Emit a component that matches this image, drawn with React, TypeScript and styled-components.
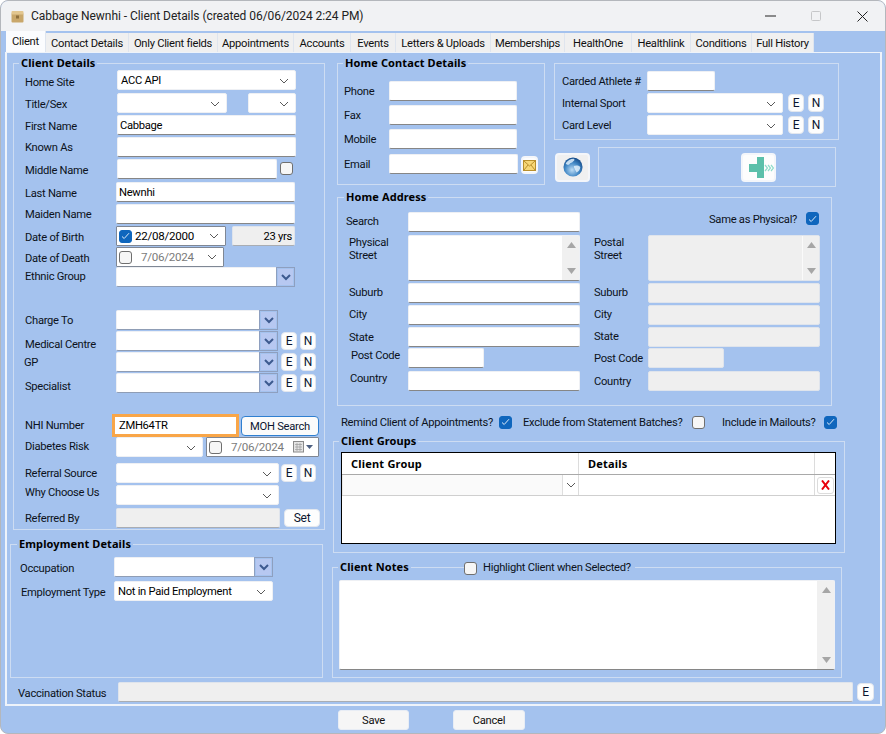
import React from 'react'
import styled, { createGlobalStyle } from 'styled-components'

const FORM_BLUE = '#a4c2ee'
const FIELD_GREY = '#efefef'

const GlobalStyle = createGlobalStyle`
  html, body { margin: 0; padding: 0; background: #fff; overflow: hidden; }
  * { box-sizing: border-box; }
  body { font-family: Roboto, "Noto Sans", sans-serif; font-size: 11.2px; letter-spacing: -0.28px; color: #0c1220; }
`

const Window = styled.div`
  width: 886px;
  height: 734px;
  border: 1px solid #b4b7bc;
  border-radius: 8px;
  overflow: hidden;
  background: ${FORM_BLUE};
  display: flex;
  flex-direction: column;
`

const TitleBar = styled.div`
  height: 30px;
  flex: none;
  background: #f1f2f4;
  display: flex;
  align-items: center;
  padding-left: 10px;
`

const TitleText = styled.div`
  margin-left: 7px;
  font-size: 12px;
  letter-spacing: -0.05px;
  color: #222;
  flex: 1;
`

const WinButton = styled.div`
  width: 46px;
  height: 30px;
  display: flex;
  align-items: center;
  justify-content: center;
`

const TabStrip = styled.div`
  height: 21px;
  flex: none;
  display: flex;
  align-items: flex-end;
  padding-left: 5px;
`

const Tab = styled.div<{ $w: number; $active?: boolean }>`
  width: ${p => p.$w}px;
  height: ${p => (p.$active ? 21 : 19)}px;
  padding-top: ${p => (p.$active ? 0 : 1)}px;
  background: ${p => (p.$active ? '#fbfcfe' : '#f0f0f0')};
  border-right: 1px solid #dfe5ee;
  display: flex;
  align-items: center;
  justify-content: center;
  white-space: nowrap;
  color: #101010;
`

const Panel = styled.div`
  width: 877px;
  height: 654px;
  flex: none;
  margin-left: 4px;
  border: 2px solid #eef3fa;
  border-top-width: 1px;
  padding-top: 1px;
  display: flex;
  flex-direction: column;
`

const FormBody = styled.div`
  display: grid;
  grid-template-columns: 325px 1fr;
`

const Column = styled.div`
  display: flex;
  flex-direction: column;
  align-items: flex-start;
  padding-top: 9px;
`

const Group = styled.div<{ $w: number; $h: number; $ml?: number; $mt?: number; $pt?: number }>`
  position: relative;
  flex: none;
  width: ${p => p.$w}px;
  height: ${p => p.$h}px;
  margin-left: ${p => p.$ml ?? 0}px;
  margin-top: ${p => p.$mt ?? 0}px;
  padding-top: ${p => p.$pt ?? 0}px;
  border: 1px solid #cddcf2;
`

const Legend = styled.div<{ $left?: number }>`
  position: absolute;
  top: -8px;
  left: ${p => p.$left ?? 5}px;
  padding: 0 2px;
  line-height: 14px;
  font-family: "Noto Sans", sans-serif;
  font-size: 11px;
  letter-spacing: 0.1px;
  font-weight: 700;
  background: ${FORM_BLUE};
  color: #000;
  white-space: nowrap;
`

const LegendCheck = styled(Legend)`
  display: flex;
  align-items: center;
  gap: 6px;
  font-family: Roboto, sans-serif;
  font-size: 11.2px;
  letter-spacing: -0.28px;
  font-weight: 400;
  line-height: 16px;
  padding: 0 4px 0 0;
  color: #0c1220;
`

const Row = styled.div<{ $h: number }>`
  display: flex;
  align-items: flex-start;
  height: ${p => p.$h}px;
`

const Label = styled.div<{ $x?: number; $w: number; $y?: number }>`
  flex: none;
  margin-left: ${p => p.$x ?? 0}px;
  width: ${p => p.$w}px;
  margin-top: ${p => p.$y ?? 3}px;
  line-height: 16px;
  white-space: nowrap;
`

const TwoLineLabel = styled(Label)`
  line-height: 13px;
  white-space: normal;
`

const Input = styled.div<{ $w: number; $h?: number; $ml?: number; $off?: boolean }>`
  flex: none;
  width: ${p => p.$w}px;
  height: ${p => p.$h ?? 20}px;
  margin-left: ${p => p.$ml ?? 0}px;
  background: ${p => (p.$off ? FIELD_GREY : '#fff')};
  border: 1px solid ${p => (p.$off ? '#dfe4ec' : '#eef0f4')};
  border-bottom-color: ${p => (p.$off ? '#dfe4ec' : '#868686')};
  border-radius: 2px;
  padding: 0 2px;
  line-height: 20px;
  color: #000;
  white-space: nowrap;
  overflow: hidden;
`

const DisabledInput = styled(Input)`
  border-bottom-color: #a9adb3;
`

const AgeBox = styled(Input)`
  text-align: right;
  padding-right: 2px;
  border-color: #dfe4ec;
  border-bottom-color: #a9adb3;
`

const NhiInput = styled(Input)`
  border: 3px solid #f9a648;
  border-radius: 0;
  line-height: 17px;
  padding: 0 4px;
`

const Memo = styled.div<{ $w: number; $h: number; $ml?: number; $off?: boolean }>`
  flex: none;
  display: flex;
  justify-content: flex-end;
  width: ${p => p.$w}px;
  height: ${p => p.$h}px;
  margin-left: ${p => p.$ml ?? 0}px;
  background: ${p => (p.$off ? FIELD_GREY : '#fff')};
  border: 1px solid ${p => (p.$off ? '#dfe4ec' : '#eef0f4')};
  border-bottom-color: ${p => (p.$off ? '#dfe4ec' : '#868686')};
  border-radius: 2px;
`

const ScrollTrack = styled.div<{ $off?: boolean }>`
  width: 17px;
  background: ${p => (p.$off ? FIELD_GREY : '#f0f0f0')};
  border-left: 1px solid ${p => (p.$off ? '#fafafa' : '#f0f0f0')};
  display: flex;
  flex-direction: column;
  justify-content: space-between;
  align-items: center;
  padding: 6px 0 6px;
`

const Combo = styled.div<{ $w: number; $ml?: number }>`
  flex: none;
  width: ${p => p.$w}px;
  height: 20px;
  margin-left: ${p => p.$ml ?? 0}px;
  background: #fff;
  border: 1px solid #eef0f4;
  border-radius: 2px;
  display: flex;
  align-items: center;
  justify-content: space-between;
  padding: 1px 6px 0 3px;
  color: #000;
  white-space: nowrap;
`

const Lookup = styled.div<{ $w: number; $ml?: number }>`
  flex: none;
  display: flex;
  width: ${p => p.$w}px;
  height: 20px;
  margin-left: ${p => p.$ml ?? 0}px;
  background: #fff;
  border: 1px solid #eef0f4;
  border-bottom-color: #8f9db5;
  border-radius: 2px 0 0 2px;
  justify-content: flex-end;
`

const LookupButton = styled.div`
  width: 19px;
  margin: -1px -1px -1px 0;
  background: ${FORM_BLUE};
  border: 1px solid #8e9fbf;
  padding: 1px;
  display: flex;

  & > span {
    flex: 1;
    background: #b7c8f1;
    display: flex;
    align-items: center;
    justify-content: center;
  }
`

const DateBox = styled.div<{ $w: number; $ml?: number; $muted?: boolean }>`
  flex: none;
  width: ${p => p.$w}px;
  height: 20px;
  margin-left: ${p => p.$ml ?? 0}px;
  background: #fff;
  border: 1px solid #7f8794;
  border-radius: 1px;
  display: flex;
  align-items: center;
  padding: 0 6px 0 2px;
  gap: ${p => (p.$muted ? 9 : 3)}px;
  color: ${p => (p.$muted ? '#7a7a7a' : '#000')};
  font-size: 11.6px;
  white-space: nowrap;

  & > svg:last-child { margin-left: auto; flex: none; }
`

const SmallButton = styled.div<{ $w?: number; $h?: number; $ml?: number; $mt?: number }>`
  flex: none;
  width: ${p => p.$w ?? 16}px;
  height: ${p => p.$h ?? 18}px;
  margin-left: ${p => p.$ml ?? 3}px;
  margin-top: ${p => p.$mt ?? 1}px;
  background: #fdfdfd;
  border: 1px solid #e3e7ee;
  border-radius: 4px;
  display: flex;
  align-items: center;
  justify-content: center;
  font-size: 12px;
  color: #0b1530;
`

const MohButton = styled(SmallButton)`
  border: 1px solid #2f7fd0;
  background: #fbfbfb;
  font-size: 11.2px;
`

const IconButton = styled(SmallButton)<{ $grey?: boolean }>`
  padding: 0;
  border-width: 2px;
  border-color: #f4f6fa;
  background: ${p => (p.$grey ? '#f0f0f0' : '#fdfdfd')};
`

const Box = styled.span<{ $on?: boolean; $ml?: number; $mt?: number }>`
  flex: none;
  display: inline-flex;
  align-items: center;
  justify-content: center;
  width: 13px;
  height: 13px;
  margin-left: ${p => p.$ml ?? 0}px;
  margin-top: ${p => p.$mt ?? 0}px;
  border-radius: 3px;
  background: ${p => (p.$on ? '#0f66bd' : '#f6f6f6')};
  border: 1px solid ${p => (p.$on ? '#0f66bd' : '#6f6f6f')};
`

const CheckLine = styled.div`
  margin-left: 9px;
  margin-top: 7px;
  height: 18px;
  display: flex;
  align-items: center;
`

const CheckText = styled.span<{ $w: number; $ml?: number }>`
  width: ${p => p.$w}px;
  margin-left: ${p => p.$ml ?? 0}px;
  white-space: nowrap;
`

const TopBand = styled.div`
  display: flex;
  align-items: flex-start;
  margin-left: 5px;
`

const SideColumn = styled.div`
  margin-left: 9px;
  width: 285px;
  display: flex;
  flex-direction: column;
`

const ButtonBand = styled.div`
  display: flex;
  align-items: center;
  margin-top: 7px;
`

const PlusFrame = styled.div`
  margin-left: 8px;
  width: 238px;
  height: 40px;
  border: 1px solid #cddcf2;
  display: flex;
  align-items: center;
  padding-left: 142px;
`

const GridTable = styled.div`
  margin-left: 7px;
  margin-top: 10px;
  width: 495px;
  height: 92px;
  background: #fff;
  border: 1px solid #000;
`

const TableRow = styled.div<{ $h: number; $rule: string }>`
  display: grid;
  grid-template-columns: 237px 236px 20px;
  height: ${p => p.$h}px;
  border-bottom: 1px solid ${p => p.$rule};
`

const HeadCell = styled.div<{ $last?: boolean }>`
  padding-left: ${p => (p.$last ? 0 : 9)}px;
  line-height: 21px;
  font-family: "Noto Sans", sans-serif;
  font-size: 11px;
  letter-spacing: 0.2px;
  font-weight: 700;
  color: #000;
  border-right: ${p => (p.$last ? 'none' : '1px solid #dcdcdc')};
`

const PickCell = styled.div`
  background: #fafafa;
  border-right: 1px solid #dcdcdc;
  border-left: 1px solid #e8e8e8;
  display: flex;
  justify-content: flex-end;

  & > span {
    width: 16px;
    border-left: 1px solid #dedede;
    background: #fff;
    display: flex;
    align-items: center;
    justify-content: center;
  }
`

const PlainCell = styled.div`
  border-right: 1px solid #dcdcdc;
`

const RemoveCell = styled.div`
  display: flex;
  align-items: center;
  justify-content: center;
`

const RemoveButton = styled.div`
  width: 17px;
  height: 17px;
  border: 1px solid #dcdcdc;
  border-radius: 3px;
  display: flex;
  align-items: center;
  justify-content: center;
`

const VaccineRow = styled.div`
  margin-top: 4px;
  margin-left: 11px;
  display: flex;
  align-items: flex-start;
  height: 20px;
`

const Footer = styled.div`
  flex: 1;
  display: flex;
  align-items: flex-start;
  padding: 4px 0 0 337px;
`

const FooterButton = styled.div<{ $w: number; $ml?: number }>`
  width: ${p => p.$w}px;
  height: 20px;
  margin-left: ${p => p.$ml ?? 0}px;
  background: #f6f6f6;
  border: 1px solid #e8edf5;
  border-radius: 3px;
  display: flex;
  align-items: center;
  justify-content: center;
  color: #111;
`

const tabs: [string, number][] = [
  ['Client', 40], ['Contact Details', 83], ['Only Client fields', 89], ['Appointments', 76],
  ['Accounts', 57], ['Events', 45], ['Letters & Uploads', 95], ['Memberships', 74],
  ['HealthOne', 67], ['Healthlink', 59], ['Conditions', 61], ['Full History', 62],
]

const Chevron = () => (
  <svg width="10" height="6" viewBox="0 0 10 6" fill="none" stroke="#5a5a5a" strokeWidth="1">
    <path d="M1 1l4 4 4-4" />
  </svg>
)

const LookupArrow = () => (
  <svg width="10" height="7" viewBox="0 0 10 7" fill="none" stroke="#3d5a8f" strokeWidth="2">
    <path d="M1 1l4 4 4-4" />
  </svg>
)

const Tick = () => (
  <svg width="9" height="8" viewBox="0 0 9 8" fill="none" stroke="#dbe9f8" strokeWidth="1">
    <path d="M1 4.5l2.2 2L8 1.2" />
  </svg>
)

const Check = ({ on, ml, mt }: { on?: boolean; ml?: number; mt?: number }) => (
  <Box $on={on} $ml={ml} $mt={mt}>{on && <Tick />}</Box>
)

const ScrollArrows = ({ off }: { off?: boolean }) => (
  <ScrollTrack $off={off}>
    <svg width="9" height="6" viewBox="0 0 9 6"><path d="M4.5 0L9 6H0z" fill="#a6a6a6" /></svg>
    <svg width="9" height="6" viewBox="0 0 9 6"><path d="M4.5 6L0 0h9z" fill="#a6a6a6" /></svg>
  </ScrollTrack>
)

const EditNew = ({ first = 3 }: { first?: number }) => (
  <>
    <SmallButton $ml={first}>E</SmallButton>
    <SmallButton>N</SmallButton>
  </>
)

const AppIcon = () => (
  <svg width="13" height="13" viewBox="0 0 13 13">
    <rect x="0.5" y="3" width="12" height="9.5" rx="1" fill="#c9a76a" />
    <rect x="0.5" y="1" width="12" height="3.5" rx="1" fill="#e2c68f" />
    <rect x="5" y="5.5" width="3" height="3" fill="#8d6f3c" />
  </svg>
)

const EnvelopeIcon = () => (
  <svg width="13" height="11" viewBox="0 0 13 11">
    <rect x="0.5" y="0.5" width="12" height="10" fill="#f7d777" stroke="#b98f2c" />
    <path d="M1 1l5.5 5L12 1M1 10l4-5M12 10L8 5" fill="none" stroke="#b98f2c" />
  </svg>
)

const GlobeIcon = () => (
  <svg width="20" height="20" viewBox="0 0 22 22">
    <defs>
      <radialGradient id="globeFill" cx="0.45" cy="0.65" r="0.7">
        <stop offset="0" stopColor="#bcdcf5" />
        <stop offset="0.55" stopColor="#3f86c4" />
        <stop offset="1" stopColor="#0d3f7d" />
      </radialGradient>
    </defs>
    <circle cx="11" cy="11" r="10.5" fill="url(#globeFill)" />
    <path d="M3 7c2-3 5-5 9-5 1 1 1 2-1 3-1 2-3 1-4 3-1 1-3 1-4-1zM12 10c2-1 5-1 7 1 0 3-2 5-4 6-1-2-2-3-2-4-1-1-1-2-1-3z" fill="#dfeefa" opacity="0.85" />
  </svg>
)

const PlusIcon = () => (
  <svg width="31" height="25" viewBox="0 0 31 25">
    <path d="M14 2h7v21h-7v-6H6V9h8z" fill="#5cc0aa" />
    <path d="M22 10l2.5 3-2.5 3M25 10l2.5 3-2.5 3M28 10l2.5 3-2.5 3" fill="none" stroke="#8fdcca" strokeWidth="1.2" />
  </svg>
)

const CalendarIcon = () => (
  <svg width="21" height="12" viewBox="0 0 21 12">
    <rect x="0.5" y="0.5" width="10" height="10.5" fill="#e4e4e4" stroke="#8a8a8a" />
    <path d="M2 3.5h7M2 6h7M2 8.5h7M4 2v8M7 2v8" stroke="#9c9c9c" strokeWidth="0.7" />
    <path d="M13 4h7l-3.5 4z" fill="#4d5f80" />
  </svg>
)

const ClientDetails = () => (
  <Group $w={312} $h={467} $ml={6} $pt={6}>
    <Legend>Client Details</Legend>
    <Row $h={23}><Label $x={11} $w={92} $y={5}>Home Site</Label><Combo $w={179}>ACC API<Chevron /></Combo></Row>
    <Row $h={22}><Label $x={11} $w={92} $y={4}>Title/Sex</Label><Combo $w={110}><span /><Chevron /></Combo><Combo $w={48} $ml={21}><span /><Chevron /></Combo></Row>
    <Row $h={22}><Label $x={11} $w={92} $y={4}>First Name</Label><Input $w={179}>Cabbage</Input></Row>
    <Row $h={22}><Label $x={11} $w={92}>Known As</Label><Input $w={179} /></Row>
    <Row $h={23}><Label $x={11} $w={92} $y={4}>Middle Name</Label><Input $w={160} /><Check ml={3} mt={3} /></Row>
    <Row $h={22}><Label $x={11} $w={91} $y={4}>Last Name</Label><Input $w={179}>Newnhi</Input></Row>
    <Row $h={22}><Label $x={11} $w={91}>Maiden Name</Label><Input $w={179} /></Row>
    <Row $h={21}><Label $x={11} $w={91} $y={4}>Date of Birth</Label><DateBox $w={110}><Check on />22/08/2000<Chevron /></DateBox><AgeBox $w={63} $ml={6} $off>23 yrs</AgeBox></Row>
    <Row $h={20}><Label $x={11} $w={91} $y={4}>Date of Death</Label><DateBox $w={108} $muted><Check />7/06/2024<Chevron /></DateBox></Row>
    <Row $h={43}><Label $x={11} $w={91} $y={2}>Ethnic Group</Label><Lookup $w={179}><LookupButton><span><LookupArrow /></span></LookupButton></Lookup></Row>
    <Row $h={21}><Label $x={11} $w={91}>Charge To</Label><Lookup $w={162}><LookupButton><span><LookupArrow /></span></LookupButton></Lookup></Row>
    <Row $h={21}><Label $x={11} $w={91} $y={6}>Medical Centre</Label><Lookup $w={162}><LookupButton><span><LookupArrow /></span></LookupButton></Lookup><EditNew /></Row>
    <Row $h={21}><Label $x={10} $w={92}>GP</Label><Lookup $w={162}><LookupButton><span><LookupArrow /></span></LookupButton></Lookup><EditNew /></Row>
    <Row $h={41}><Label $x={11} $w={91} $y={6}>Specialist</Label><Lookup $w={162}><LookupButton><span><LookupArrow /></span></LookupButton></Lookup><EditNew /></Row>
    <Row $h={23}><Label $x={11} $w={87} $y={4}>NHI Number</Label><NhiInput $w={127} $h={23}>ZMH64TR</NhiInput><MohButton $w={78} $h={20} $ml={2} $mt={2}>MOH Search</MohButton></Row>
    <Row $h={26}><Label $x={11} $w={91} $y={2}>Diabetes Risk</Label><Combo $w={87}><span /><Chevron /></Combo><DateBox $w={113} $ml={3} $muted><Check />7/06/2024<CalendarIcon /></DateBox></Row>
    <Row $h={22}><Label $x={11} $w={91}>Referral Source</Label><Combo $w={163}><span /><Chevron /></Combo><SmallButton $ml={2}>E</SmallButton><SmallButton>N</SmallButton></Row>
    <Row $h={23}><Label $x={11} $w={91} $y={0}>Why Choose Us</Label><Combo $w={163}><span /><Chevron /></Combo></Row>
    <Row $h={21}><Label $x={11} $w={91}>Referred By</Label><DisabledInput $w={164} $off /><SmallButton $w={36} $ml={4}>Set</SmallButton></Row>
  </Group>
)

const EmploymentDetails = () => (
  <Group $w={313} $h={134} $ml={3} $mt={14} $pt={12}>
    <Legend $left={6}>Employment Details</Legend>
    <Row $h={24}><Label $x={9} $w={94} $y={4}>Occupation</Label><Lookup $w={159}><LookupButton><span><LookupArrow /></span></LookupButton></Lookup></Row>
    <Row $h={20}><Label $x={10} $w={93} $y={4}>Employment Type</Label><Combo $w={159}>Not in Paid Employment<Chevron /></Combo></Row>
  </Group>
)

const HomeContact = () => (
  <Group $w={208} $h={122} $pt={17}>
    <Legend>Home Contact Details</Legend>
    <Row $h={24}><Label $x={6} $w={45}>Phone</Label><Input $w={128} /></Row>
    <Row $h={24}><Label $x={6} $w={45}>Fax</Label><Input $w={128} /></Row>
    <Row $h={25}><Label $x={6} $w={45}>Mobile</Label><Input $w={128} /></Row>
    <Row $h={24}>
      <Label $x={6} $w={45}>Email</Label>
      <Input $w={129} />
      <IconButton $w={17} $h={18} $mt={2}><EnvelopeIcon /></IconButton>
    </Row>
  </Group>
)

const Athlete = () => (
  <Group $w={285} $h={77} $pt={7}>
    <Row $h={22}><Label $x={7} $w={85}>Carded Athlete #</Label><Input $w={68} /></Row>
    <Row $h={22}><Label $x={7} $w={85}>Internal Sport</Label><Combo $w={136}><span /><Chevron /></Combo><SmallButton $ml={5}>E</SmallButton><SmallButton $ml={4}>N</SmallButton></Row>
    <Row $h={20}><Label $x={7} $w={85}>Card Level</Label><Combo $w={136}><span /><Chevron /></Combo><SmallButton $ml={5}>E</SmallButton><SmallButton $ml={4}>N</SmallButton></Row>
  </Group>
)

const HomeAddress = () => (
  <Group $w={495} $h={209} $ml={5} $mt={10} $pt={14}>
    <Legend $left={6}>Home Address</Legend>
    <Row $h={23}>
      <Label $x={8} $w={62} $y={2}>Search</Label>
      <Input $w={172} />
      <Label $x={129} $w={97} $y={0}>Same as Physical?</Label>
      <Check on />
    </Row>
    <Row $h={48}>
      <TwoLineLabel $x={11} $w={59} $y={1}>Physical Street</TwoLineLabel>
      <Memo $w={172} $h={46}><ScrollArrows /></Memo>
      <TwoLineLabel $x={14} $w={54} $y={1}>Postal Street</TwoLineLabel>
      <Memo $w={172} $h={46} $off><ScrollArrows off /></Memo>
    </Row>
    <Row $h={22}><Label $x={11} $w={59} $y={2}>Suburb</Label><Input $w={172} /><Label $x={14} $w={54} $y={2}>Suburb</Label><Input $w={172} $off /></Row>
    <Row $h={22}><Label $x={11} $w={59} $y={2}>City</Label><Input $w={172} /><Label $x={14} $w={54} $y={2}>City</Label><Input $w={172} $off /></Row>
    <Row $h={21}><Label $x={11} $w={59}>State</Label><Input $w={172} /><Label $x={14} $w={54} $y={2}>State</Label><Input $w={172} $off /></Row>
    <Row $h={23}><Label $x={13} $w={57} $y={0}>Post Code</Label><Input $w={76} /><Label $x={110} $w={54}>Post Code</Label><Input $w={76} $off /></Row>
    <Row $h={20}><Label $x={12} $w={58} $y={0}>Country</Label><Input $w={172} /><Label $x={14} $w={54}>Country</Label><Input $w={172} $off /></Row>
  </Group>
)

const ClientGroups = () => (
  <Group $w={512} $h={112} $ml={1} $mt={10}>
    <Legend>Client Groups</Legend>
    <GridTable>
      <TableRow $h={22} $rule="#a9a9a9">
        <HeadCell>Client Group</HeadCell>
        <HeadCell>Details</HeadCell>
        <HeadCell $last />
      </TableRow>
      <TableRow $h={21} $rule="#cfcfcf">
        <PickCell><span><Chevron /></span></PickCell>
        <PlainCell />
        <RemoveCell>
          <RemoveButton>
            <svg width="9" height="10" viewBox="0 0 9 10" fill="none" stroke="#e8000b" strokeWidth="2"><path d="M1 0.5l7 9M8 0.5l-7 9" /></svg>
          </RemoveButton>
        </RemoveCell>
      </TableRow>
    </GridTable>
  </Group>
)

const ClientNotes = () => (
  <Group $w={510} $h={111} $mt={14} $pt={12}>
    <Legend>Client Notes</Legend>
    <LegendCheck $left={131}><Check />Highlight Client when Selected?</LegendCheck>
    <Row $h={90}><Memo $w={496} $h={90} $ml={6}><ScrollArrows /></Memo></Row>
  </Group>
)

export default function App() {
  return (
    <>
      <GlobalStyle />
      <Window>
        <TitleBar>
          <AppIcon />
          <TitleText>Cabbage Newnhi - Client Details (created 06/06/2024 2:24 PM)</TitleText>
          <WinButton><svg width="11" height="2"><path d="M0 1h11" stroke="#222" /></svg></WinButton>
          <WinButton><svg width="10" height="10"><rect x="0.5" y="0.5" width="9" height="9" rx="1" fill="none" stroke="#c6c7c9" /></svg></WinButton>
          <WinButton><svg width="11" height="11"><path d="M0.5 0.5l10 10M10.5 0.5l-10 10" stroke="#222" /></svg></WinButton>
        </TitleBar>
        <TabStrip>
          {tabs.map(([name, w], i) => (
            <Tab key={name} $w={w} $active={i === 0}>{name}</Tab>
          ))}
        </TabStrip>
        <Panel>
          <FormBody>
            <Column>
              <ClientDetails />
              <EmploymentDetails />
            </Column>
            <Column>
              <TopBand>
                <HomeContact />
                <SideColumn>
                  <Athlete />
                  <ButtonBand>
                    <IconButton $w={35} $h={29} $ml={1} $mt={0} $grey><GlobeIcon /></IconButton>
                    <PlusFrame>
                      <IconButton $w={35} $h={29} $ml={0} $mt={0}><PlusIcon /></IconButton>
                    </PlusFrame>
                  </ButtonBand>
                </SideColumn>
              </TopBand>
              <HomeAddress />
              <CheckLine>
                <CheckText $w={150}>Remind Client of Appointments?</CheckText>
                <Check on ml={8} />
                <CheckText $w={161} $ml={11}>Exclude from Statement Batches?</CheckText>
                <Check ml={8} />
                <CheckText $w={94} $ml={17}>Include in Mailouts?</CheckText>
                <Check on ml={8} />
              </CheckLine>
              <ClientGroups />
              <ClientNotes />
            </Column>
          </FormBody>
          <VaccineRow>
            <Label $w={100} $y={4}>Vaccination Status</Label>
            <DisabledInput $w={735} $off />
            <SmallButton $w={17} $ml={4}>E</SmallButton>
          </VaccineRow>
        </Panel>
        <Footer>
          <FooterButton $w={71}>Save</FooterButton>
          <FooterButton $w={72} $ml={44}>Cancel</FooterButton>
        </Footer>
      </Window>
    </>
  )
}
